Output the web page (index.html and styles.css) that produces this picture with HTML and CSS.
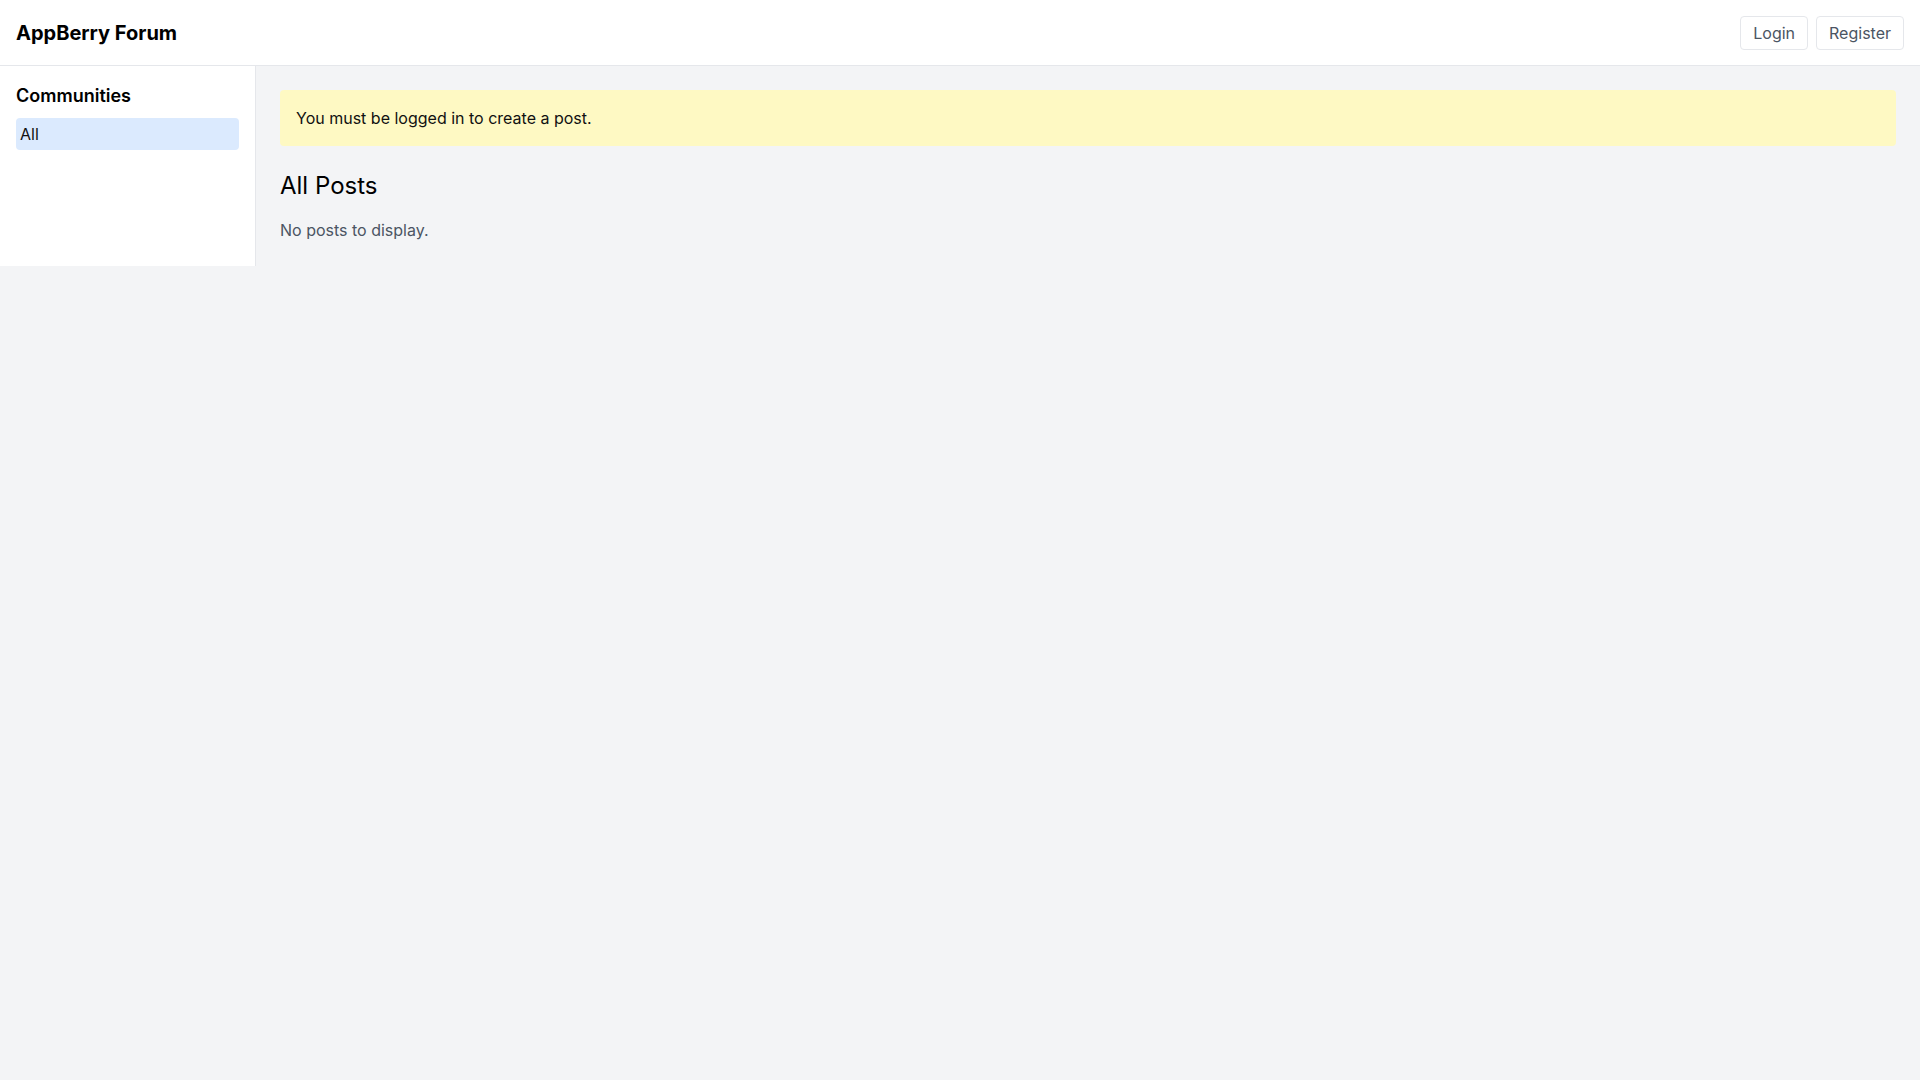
FILE: index.html
```html
<!DOCTYPE html>
<html lang="en">
<head>
  <meta charset="UTF-8" />
  <title>AppBerry Forum</title>
  <meta name="viewport" content="width=device-width, initial-scale=1.0" />
  <link rel="stylesheet" href="styles.css">
</head>
<body>
  <header class="topbar">
    <div class="brand">AppBerry Forum</div>
    <div class="auth">
      <button class="btn">Login</button>
      <button class="btn">Register</button>
    </div>
  </header>

  <div class="layout">
    <aside class="sidebar">
      <h2 class="sidebar-title">Communities</h2>
      <ul class="community-list">
        <li class="community active">All</li>
      </ul>
    </aside>

    <main class="content">
      <div class="notice">You must be logged in to create a post.</div>
      <h1 class="page-title">All Posts</h1>
      <p class="empty">No posts to display.</p>
    </main>
  </div>
</body>
</html>
```

FILE: styles.css
```css
* {
  box-sizing: border-box;
}

html, body {
  margin: 0;
  padding: 0;
  height: 100%;
}

body {
  background: #f3f4f6;
  font-family: Inter, 'Noto Sans', sans-serif;
  font-size: 16px;
  line-height: 24px;
  color: #111827;
}

.topbar {
  display: flex;
  justify-content: space-between;
  align-items: center;
  height: 66px;
  padding: 0 16px;
  background: #fff;
  border-bottom: 1px solid #e5e7eb;
}

.brand {
  font-size: 20px;
  line-height: 28px;
  font-weight: 700;
  color: #000;
}

.auth {
  display: flex;
  gap: 8px;
}

.btn {
  font-family: inherit;
  font-size: 16px;
  line-height: 24px;
  padding: 4px 12px;
  color: #4b5563;
  background: #fff;
  border: 1px solid #e5e7eb;
  border-radius: 4px;
  cursor: pointer;
}

.layout {
  display: flex;
}

.sidebar {
  width: 256px;
  padding: 16px;
  background: #fff;
  border-right: 1px solid #e5e7eb;
}

.sidebar-title {
  margin: 0 0 8px;
  font-size: 18px;
  line-height: 28px;
  font-weight: 600;
  color: #000;
}

.community-list {
  list-style: none;
  margin: 0;
  padding: 0;
}

.community {
  padding: 4px;
  border-radius: 4px;
  color: #111;
}

.community.active {
  background: #dbeafe;
}

.content {
  flex: 1;
  padding: 24px;
}

.notice {
  padding: 16px;
  margin-bottom: 24px;
  background: #fef9c3;
  border-radius: 4px;
  color: #111;
}

.page-title {
  margin: 0 0 16px;
  font-size: 24px;
  line-height: 32px;
  font-weight: 400;
  color: #000;
}

.empty {
  margin: 0;
  color: #4b5563;
}
```
